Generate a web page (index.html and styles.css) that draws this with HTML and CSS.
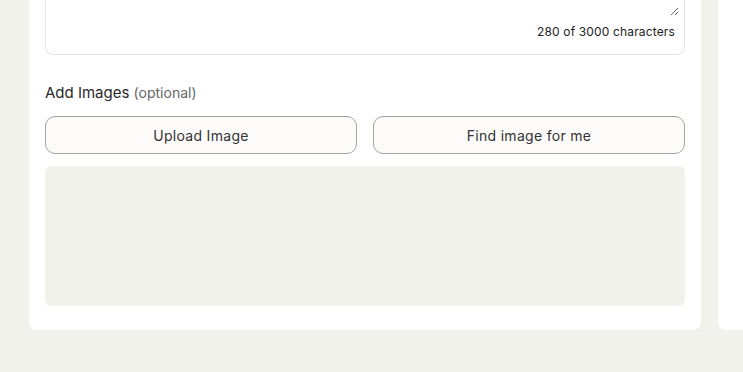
FILE: index.html
```html
<!DOCTYPE html>
<html lang="en">

<head>
    <meta charset="UTF-8">
    <meta name="viewport" content="width=device-width, initial-scale=1.0">
    <title>Create post</title>
    <link rel="stylesheet" href="styles.css">
</head>

<body>
    <div class="page">
        <div class="card">
            <div class="field">
                <textarea class="text-input"></textarea>
                <div class="counter">280 of 3000 characters</div>
            </div>

            <div class="label">Add Images <span class="optional">(optional)</span></div>

            <div class="buttons">
                <button class="outline-button">Upload Image</button>
                <button class="outline-button">Find image for me</button>
            </div>

            <div class="image-area"></div>
        </div>
        <div class="side-card"></div>
    </div>
</body>
</html>
```

FILE: styles.css
```css
body {
    font-family: Inter, "Open Sans", sans-serif;
    margin: 0;
    background-color: #f2f2ed;
    overflow: hidden;
}

.page {
    display: flex;
    gap: 17px;
    padding-left: 29px;
    margin-top: -100px;
}

.card {
    flex: 0 0 672px;
    box-sizing: border-box;
    background-color: #ffffff;
    border-radius: 8px;
    padding: 0 16px 24px;
}

.side-card {
    flex: 0 0 200px;
    height: 430px;
    background-color: #ffffff;
    border-radius: 8px;
}

.field {
    box-sizing: border-box;
    height: 155px;
    border: 1px solid #e4e4e0;
    border-top: none;
    border-radius: 0 0 8px 8px;
    display: flex;
    flex-direction: column;
}

.text-input {
    flex: 1;
    border: none;
    outline: none;
    resize: vertical;
    margin-right: 5px;
    background: transparent;
}

.counter {
    font-size: 12px;
    letter-spacing: 0.15px;
    color: #222222;
    text-align: right;
    padding: 8px 9px 15px;
}

.label {
    margin-top: 28px;
    font-size: 15px;
    color: #2a2a2a;
}

.optional {
    font-size: 14px;
    color: #666666;
}

.buttons {
    display: grid;
    grid-template-columns: 1fr 1fr;
    gap: 16px;
    margin-top: 14px;
}

.outline-button {
    height: 38px;
    font-family: inherit;
    font-size: 14px;
    letter-spacing: 0.3px;
    color: #333333;
    background-color: #fcfbf9;
    border: 1px solid #a7a29b;
    border-radius: 10px;
}

.image-area {
    margin-top: 12px;
    height: 140px;
    background-color: #f2f2ed;
    border-radius: 6px;
}
```
